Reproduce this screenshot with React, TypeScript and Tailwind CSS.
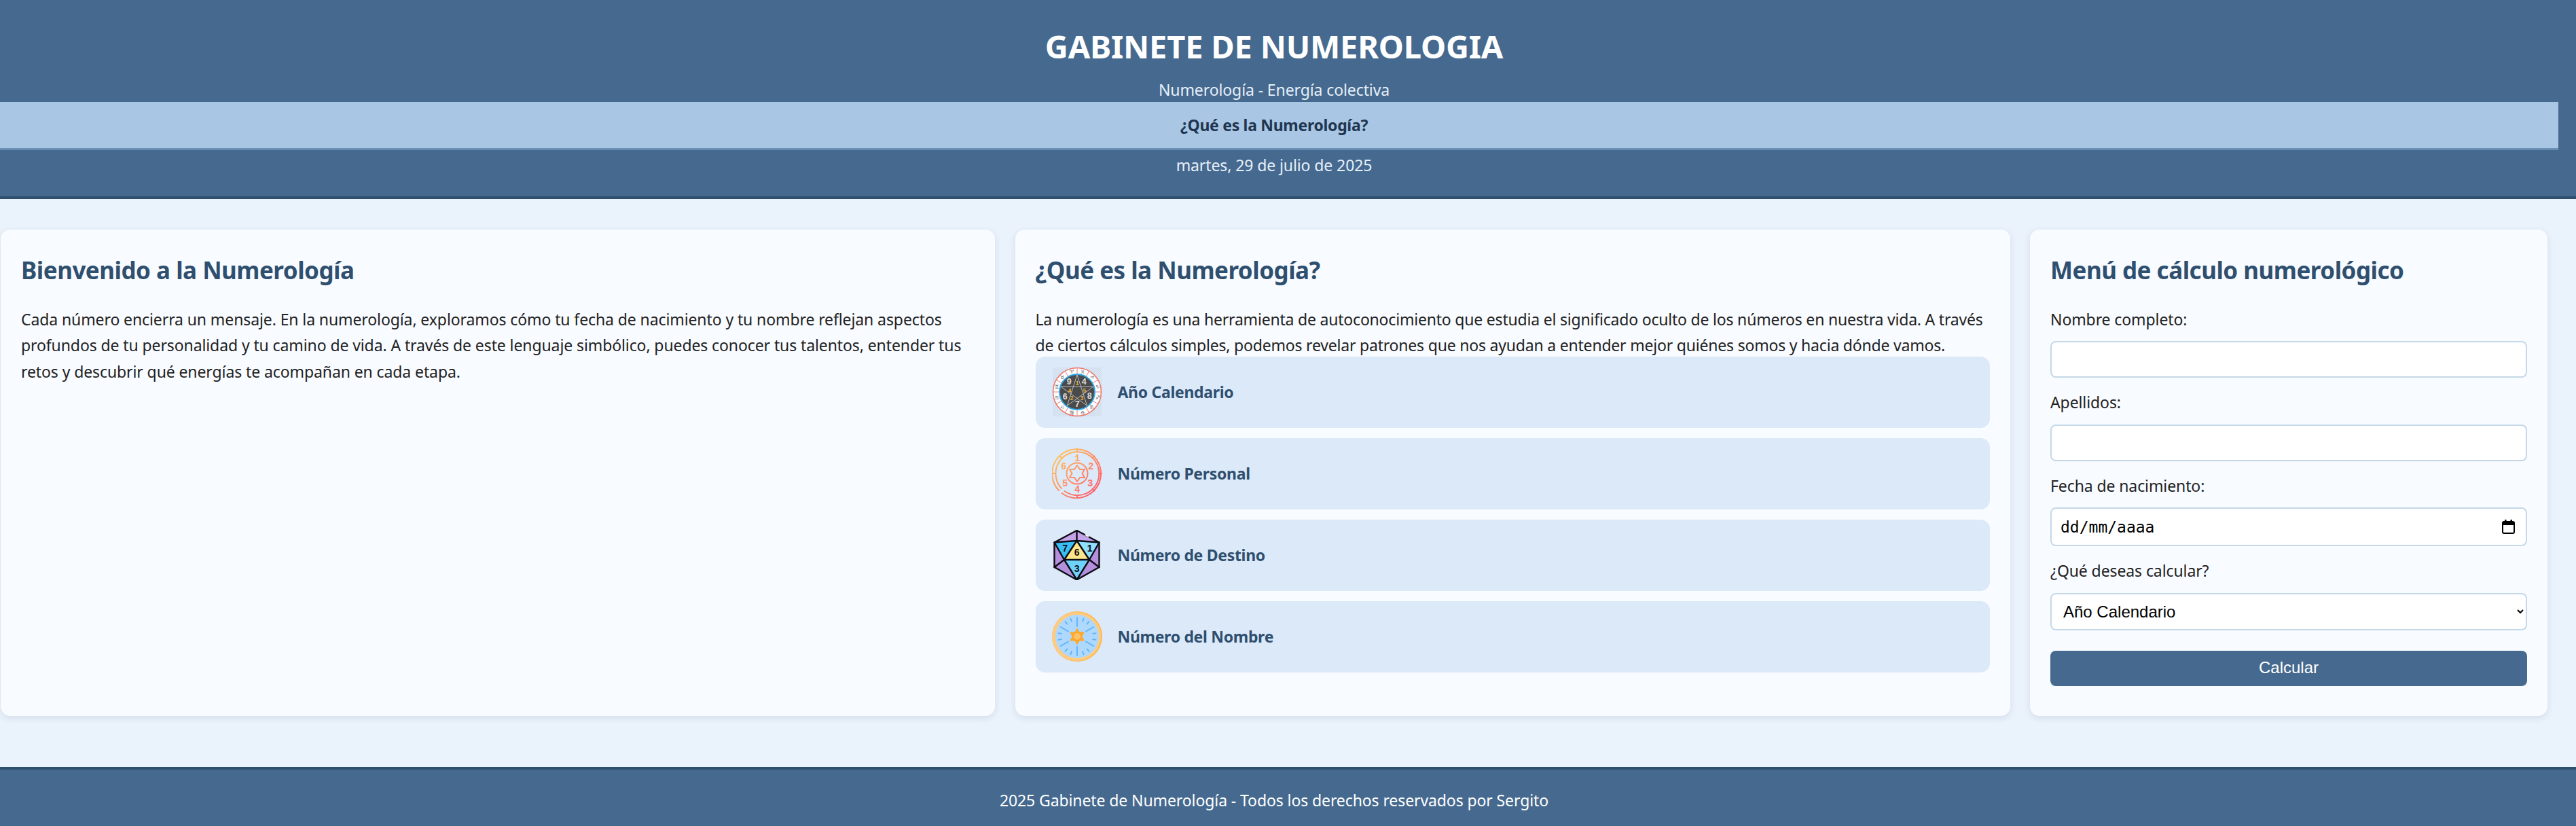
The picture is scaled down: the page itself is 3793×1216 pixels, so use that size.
const C = 37;
const pol = (r: number, deg: number) => {
  const a = (deg * Math.PI) / 180;
  return [C + r * Math.cos(a), C + r * Math.sin(a)];
};

function ZodiacIcon() {
  const signs = ["♈", "♉", "♊", "♋", "♌", "♍", "♎", "♏", "♐", "♑", "♒", "♓"];
  const star = [0, 1, 2, 3, 4].map((i) => pol(25, -90 + i * 144).join(",")).join(" ");
  const white: [string, number, number][] = [["9", -12, -15], ["4", 10, -15], ["6", -18, 7], ["8", 18, 6], ["7", 0, 18]];
  const gold: [string, number, number][] = [["1", 0, -13], ["4", -11, -2], ["5", 11, -2], ["2", -8, 9], ["3", 7, 9]];
  return (
    <svg viewBox="0 0 74 74" className="w-[74px] h-[74px] shrink-0">
      <defs>
        <pattern id="chk" width="3" height="3" patternUnits="userSpaceOnUse">
          <rect width="3" height="3" fill="#dce9f9" />
          <rect width="1.5" height="1.5" fill="#cfdbe8" />
          <rect x="1.5" y="1.5" width="1.5" height="1.5" fill="#cfdbe8" />
        </pattern>
      </defs>
      <rect x="1" y="1" width="72" height="72" fill="url(#chk)" />
      <circle cx="37" cy="37" r="35.5" fill="#fff" stroke="#ee7a72" strokeWidth="1.6" />
      {Array.from({ length: 12 }, (_, i) => {
        const [x1, y1] = pol(26, i * 30);
        const [x2, y2] = pol(35.5, i * 30);
        return <line key={i} x1={x1} y1={y1} x2={x2} y2={y2} stroke="#ee7a72" strokeWidth="1" />;
      })}
      {signs.map((s, i) => {
        const [x, y] = pol(31, -105 - 30 * i);
        return (
          <text key={i} x={x} y={y + 2.6} textAnchor="middle" fontSize="7.5" fill="#555" fontFamily="DejaVu Sans">{s}</text>
        );
      })}
      <circle cx="37" cy="37" r="26" fill="#4a4a4a" stroke="#2ea7e8" strokeWidth="2" />
      <polygon points={star} fill="none" stroke="#c9c9c9" strokeWidth="0.9" />
      {white.map(([t, x, y], i) => (
        <text key={i} x={C + x} y={C + y + 4.4} textAnchor="middle" fontSize="12.5" fill="#ddd" fontFamily="Liberation Sans">{t}</text>
      ))}
      {gold.map(([t, x, y], i) => (
        <text key={i} x={C + x} y={C + y + 3} textAnchor="middle" fontSize="8.5" fontWeight="700" fill="#e8b23a" fontFamily="Liberation Sans">{t}</text>
      ))}
    </svg>
  );
}

function CircleIcon() {
  const nums: [string, number, number][] = [["1", 0, -23], ["2", 20, -11], ["3", 19, 14], ["4", 0, 23], ["5", -18, 14], ["6", -20, -11]];
  return (
    <svg viewBox="0 0 74 74" className="w-[74px] h-[74px] shrink-0">
      <defs>
        <linearGradient id="gp" gradientUnits="userSpaceOnUse" x1="8" y1="8" x2="66" y2="66">
          <stop offset="0" stopColor="#ffc65c" />
          <stop offset="1" stopColor="#ff5a6e" />
        </linearGradient>
      </defs>
      <g fill="none" stroke="url(#gp)" strokeWidth="2" strokeLinecap="round" strokeLinejoin="round">
        <path d="M10 62 A36 36 0 1 1 14.5 66" />
        <path d="M14 59 A32 32 0 1 1 18.5 63" />
        <circle cx="37" cy="37" r="15.5" />
        <polygon points="37,25 41,31 48,31 44.5,37 48,43 41,43 37,49 33,43 26,43 29.5,37 26,31 33,31" />
        {Array.from({ length: 8 }, (_, i) => {
          const [x1, y1] = pol(32, i * 45 - 90);
          const [x2, y2] = pol(36, i * 45 - 90);
          return i === 5 ? null : <line key={i} x1={x1} y1={y1} x2={x2} y2={y2} />;
        })}
      </g>
      {nums.map(([t, x, y], i) => (
        <text key={i} x={C + x} y={C + y + 5} textAnchor="middle" fontSize="14" fontWeight="700" fill="url(#gp)" fontFamily="Liberation Mono">{t}</text>
      ))}
    </svg>
  );
}

function DiceIcon() {
  return (
    <svg viewBox="0 0 74 74" className="w-[74px] h-[74px] shrink-0">
      <polygon points="36.5,1 69.5,18.5 69.5,55 36.5,73.5 3.5,55 3.5,18.5" fill="#b48fdc" />
      <polygon points="36.5,1 69.5,18.5 36.5,16 3.5,18.5" fill="#c4a3e8" />
      <polygon points="3.5,18.5 36.5,16 18,44" fill="#39bff5" />
      <polygon points="69.5,18.5 36.5,16 55,44" fill="#8ee0fc" />
      <polygon points="36.5,16 55,44 18,44" fill="#fde68a" />
      <polygon points="18,44 55,44 36.5,73.5" fill="#6fd2fb" />
      <g fill="none" stroke="#0c0c14" strokeWidth="2.4" strokeLinejoin="round" strokeLinecap="round">
        <polygon points="36.5,1 69.5,18.5 69.5,55 36.5,73.5 3.5,55 3.5,18.5" />
        <polygon points="36.5,16 55,44 18,44" />
        <path d="M36.5 1V16M3.5 18.5L36.5 16L69.5 18.5M3.5 18.5L18 44L3.5 55M69.5 18.5L55 44L69.5 55M18 44L36.5 73.5L55 44" />
      </g>
      <line x1="49" y1="7" x2="54" y2="10" stroke="#f0f4fb" strokeWidth="2.4" />
      <g textAnchor="middle" fontWeight="700" fill="#0c0c14" fontFamily="Liberation Sans" fontSize="14">
        <text x="19" y="32">7</text>
        <text x="55.5" y="32">1</text>
        <text x="36.5" y="38">6</text>
        <text x="36.5" y="62">3</text>
      </g>
    </svg>
  );
}

function SunIcon() {
  const long = [90, 270, 30, 150, 210, 330];
  const short = [10, -10, 170, 190, 70, 110, 51.5, 128.5, 250, 290, 231.5, 308.5];
  const ray = (deg: number, r1: number, key: string) => {
    const [x1, y1] = pol(r1, deg);
    const [x2, y2] = pol(28, deg);
    return <line key={key} x1={x1} y1={y1} x2={x2} y2={y2} stroke="#5eb3f6" strokeWidth="1.8" strokeLinecap="round" />;
  };
  return (
    <svg viewBox="0 0 74 74" className="w-[74px] h-[74px] shrink-0">
      <circle cx="37" cy="37" r="37" fill="#ffb84d" />
      <circle cx="36" cy="37" r="36" fill="#ffcb80" />
      <circle cx="37" cy="37" r="32" fill="#aed8fd" />
      {long.map((d) => ray(d, 15, `l${d}`))}
      {short.map((d) => ray(d, 23.5, `s${d}`))}
      <polygon points="37,24.5 48,43.5 26,43.5" fill="#ffa726" />
      <polygon points="37,49.5 48,30.5 26,30.5" fill="#ffa726" />
      <circle cx="37" cy="37" r="5" fill="#ffc06a" />
    </svg>
  );
}

const items = [
  { label: "Año Calendario", icon: <ZodiacIcon /> },
  { label: "Número Personal", icon: <CircleIcon /> },
  { label: "Número de Destino", icon: <DiceIcon /> },
  { label: "Número del Nombre", icon: <SunIcon /> },
];

const card = "bg-[#f8fbff] rounded-[14px] shadow-[0_3px_10px_rgba(70,106,143,0.14)] px-[30px] pt-[30px]";
const heading = "text-[35px] leading-[60px] tracking-[-0.5px] font-bold text-[#2f4f6f] mb-[23px]";
const field = "block w-full bg-white border-2 border-[#c5d8e8] rounded-[8px] mt-[13px] mb-[17px]";

export default function App() {
  return (
    <div className="font-['Noto_Sans',sans-serif] min-h-[1216px] w-full overflow-hidden bg-[#eaf2fb] text-[23px] tracking-[-0.1px] leading-[38.4px] text-[#222] flex flex-col">
      <header className="h-[293px] shrink-0 bg-[#466a8f] border-b-4 border-[#2f4f6f] pt-[36px] text-center text-[#e6f0fa]">
        <h1 className="w-[3752px] text-[47px] tracking-[-0.2px] leading-[64px] font-bold text-white">GABINETE DE NUMEROLOGIA</h1>
        <p className="w-[3752px] mt-[15px] leading-[35px]">Numerología - Energía colectiva</p>
        <div className="w-[3767px] h-[71px] bg-[#a9c7e4] border-b-[3px] border-[#6a8fb5] text-[#1f3550] font-bold tracking-[-0.3px] leading-[68px] pr-[15px]">¿Qué es la Numerología?</div>
        <p className="w-[3752px] mt-[3px]">martes, 29 de julio de 2025</p>
      </header>

      <main className="w-[3752px] pl-[1px] grid grid-cols-[1464px_1465px_762px] gap-[29.5px] mt-[45px] h-[716px] shrink-0">
        <section className={card}>
          <h2 className={heading}>Bienvenido a la Numerología</h2>
          <p>Cada número encierra un mensaje. En la numerología, exploramos cómo tu fecha de nacimiento y tu nombre reflejan aspectos profundos de tu personalidad y tu camino de vida. A través de este lenguaje simbólico, puedes conocer tus talentos, entender tus retos y descubrir qué energías te acompañan en cada etapa.</p>
        </section>

        <section className={card}>
          <h2 className={heading}>¿Qué es la Numerología?</h2>
          <p className="tracking-[-0.2px]">La numerología es una herramienta de autoconocimiento que estudia el significado oculto de los números en nuestra vida. A través de ciertos cálculos simples, podemos revelar patrones que nos ayudan a entender mejor quiénes somos y hacia dónde vamos.</p>
          <ul className="flex flex-col gap-[15px] -mt-[3px]">
            {items.map((it) => (
              <li key={it.label} className="h-[105px] bg-[#dce9f9] rounded-[14px] flex items-center pl-[24px] gap-[23px] font-bold tracking-[-0.3px] text-[#2f4f6f]">
                {it.icon}
                <span>{it.label}</span>
              </li>
            ))}
          </ul>
        </section>

        <section className={card}>
          <h2 className={heading}>Menú de cálculo numerológico</h2>
          <label className="block">Nombre completo:</label>
          <input type="text" className={`${field} h-[54px]`} />
          <label className="block">Apellidos:</label>
          <input type="text" className={`${field} h-[54px]`} />
          <label className="block">Fecha de nacimiento:</label>
          <div className={`${field} h-[57px] pl-[13px] pr-[16px] flex items-center justify-between font-['DejaVu_Sans_Mono',monospace] text-[23px] tracking-normal text-black`}>
            <span>dd/mm/aaaa</span>
            <svg viewBox="0 0 19 21" className="w-[19px] h-[21px]">
              <rect x="1" y="3" width="17" height="17" rx="2" fill="#fff" stroke="#000" strokeWidth="2" />
              <rect x="1" y="3" width="17" height="5" fill="#000" />
              <rect x="4" y="0" width="2.5" height="4" fill="#000" />
              <rect x="12.5" y="0" width="2.5" height="4" fill="#000" />
            </svg>
          </div>
          <label className="block">¿Qué deseas calcular?</label>
          <select className={`${field} !mb-[30px] h-[55px] px-[13px] font-['Liberation_Sans',sans-serif] text-[24px] tracking-normal text-black`}>
            <option>Año Calendario</option>
          </select>
          <button className="block w-full h-[52px] rounded-[8px] bg-[#466a8f] text-white font-['Liberation_Sans',sans-serif] text-[24px] tracking-normal">Calcular</button>
        </section>
      </main>

      <footer className="mt-[75px] grow bg-[#466a8f] border-t-4 border-[#2f4f6f] text-white text-center">
        <p className="w-[3752px] pt-[26px]">2025 Gabinete de Numerología - Todos los derechos reservados por Sergito</p>
      </footer>
    </div>
  );
}
